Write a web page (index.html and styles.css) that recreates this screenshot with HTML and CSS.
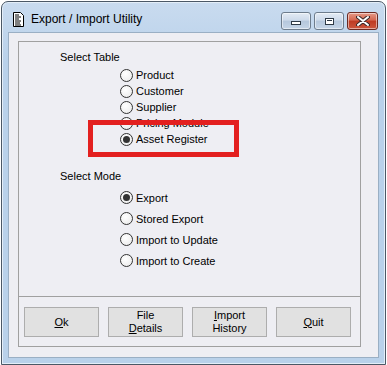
FILE: index.html
```html
<!DOCTYPE html>
<html lang="en">
<head>
    <meta charset="UTF-8">
    <title>Export / Import Utility</title>
    <link rel="stylesheet" href="styles.css">
</head>
<body>
    <div class="window">
        <div class="titlebar">
            <svg class="app-icon" width="11" height="15" viewBox="0 0 11 15">
                <path d="M0.5 0.5h7l3 3v11h-10z" fill="#fff" stroke="#000"/>
                <path d="M2 3h4M2 5h6M2 7h4M2 9h6M2 11h5M2 13h6" stroke="#000" stroke-width="1"/>
            </svg>
            <div class="title">Export / Import Utility</div>
            <div class="caption-buttons">
                <div class="cap-btn">
                    <span class="glyph-min"></span>
                </div>
                <div class="cap-btn">
                    <span class="glyph-max"></span>
                </div>
                <div class="cap-btn close">
                    <svg width="14" height="10" viewBox="0 0 14 10">
                        <path d="M2 1l10 8M12 1l-10 8" stroke="#3a2a2a" stroke-width="4" stroke-linecap="round"/>
                        <path d="M2 1l10 8M12 1l-10 8" stroke="#fff" stroke-width="2" stroke-linecap="round"/>
                    </svg>
                </div>
            </div>
        </div>

        <div class="client">
            <div class="panel">
                <div class="options">
                    <div class="group-label">Select Table</div>
                    <div class="radio-list">
                        <div class="radio"><span class="dot"></span>Product</div>
                        <div class="radio"><span class="dot"></span>Customer</div>
                        <div class="radio"><span class="dot"></span>Supplier</div>
                        <div class="radio"><span class="dot"></span>Pricing Module</div>
                        <div class="radio"><span class="dot checked"></span>Asset Register</div>
                    </div>

                    <div class="group-label mode-label">Select Mode</div>
                    <div class="radio-list mode">
                        <div class="radio"><span class="dot checked"></span>Export</div>
                        <div class="radio"><span class="dot"></span>Stored Export</div>
                        <div class="radio"><span class="dot"></span>Import to Update</div>
                        <div class="radio"><span class="dot"></span>Import to Create</div>
                    </div>

                    <div class="highlight-box"></div>
                </div>

                <div class="actions">
                    <button><u>O</u>k</button>
                    <button>File<br><u>D</u>etails</button>
                    <button><u>I</u>mport<br>History</button>
                    <button><u>Q</u>uit</button>
                </div>
            </div>
        </div>
    </div>
</body>
</html>
```

FILE: styles.css
```css
*{margin:0;padding:0;box-sizing:border-box}
body{background:#fff;font-family:"Liberation Sans",Arial,sans-serif;font-size:11px;color:#000}
.window{margin:1px 1px 0 1px;height:364px;border:1px solid #4b5866;border-radius:7px 7px 0 0;background:linear-gradient(#c9dbef,#b9d1ea 60px);padding:0 6px 6px 6px;display:flex;flex-direction:column;box-shadow:inset 0 0 0 1px #e4eef8}
.titlebar{height:30px;display:flex;align-items:center;padding:0 1px 0 5px}
.app-icon{margin-top:4px}
.title{font-size:12px;margin-left:7px;margin-top:4px;flex:1}
.caption-buttons{display:flex;gap:3px;align-self:flex-start;margin-top:10px}
.cap-btn{width:30px;height:18px;border:1px solid #6d7c8c;border-radius:3px;background:linear-gradient(#e3ebf4 0%,#cddaea 45%,#b5c7dc 50%,#c5d5e7 100%);display:flex;align-items:center;justify-content:center;box-shadow:inset 0 0 0 1px rgba(255,255,255,0.5)}
.cap-btn.close{width:31px;border-color:#6b2a22;background:linear-gradient(#e59a88 0%,#d5664f 45%,#be3a22 50%,#cc563d 100%)}
.glyph-min{width:10px;height:4px;border:1px solid #2e3a46;background:#fff;margin-top:4px}
.glyph-max{width:9px;height:7px;border:1px solid #2e3a46;background:#fff;box-shadow:inset 0 0 0 1px #fff,inset 0 2px 0 #2e3a46}
.client{flex:1;background:#eeeef3;border:1px solid #9aafc4;padding:8px 17px 10px 9px;display:flex}
.panel{flex:1;border:1px solid #a0a0a0;display:flex;flex-direction:column}
.options{flex:1;position:relative;padding:8px 0 0 41px}
.group-label{line-height:14px}
.radio-list{margin:3px 0 0 60px}
.radio{height:16px;display:flex;align-items:center;gap:3px}
.mode-label{margin-top:22px}
.mode{margin-top:4px}
.mode .radio{height:21px}
.dot{width:13px;height:13px;border:1px solid #333;border-radius:50%;background:radial-gradient(circle at 40% 35%,#fff,#e8e8e8);display:flex;align-items:center;justify-content:center}
.dot.checked::after{content:"";width:7px;height:7px;border-radius:50%;background:#333}
.highlight-box{position:absolute;left:69px;top:78px;width:151px;height:37px;border:5px solid #e3201f}
.actions{border-top:1px solid #a0a0a0;padding:10px 0 9px 5px;display:flex;gap:9px}
button{width:75px;height:30px;border:1px solid #adadad;background:#e1e1e1;font-family:"Liberation Sans",Arial,sans-serif;font-size:11px;line-height:13px;color:#000}
```
